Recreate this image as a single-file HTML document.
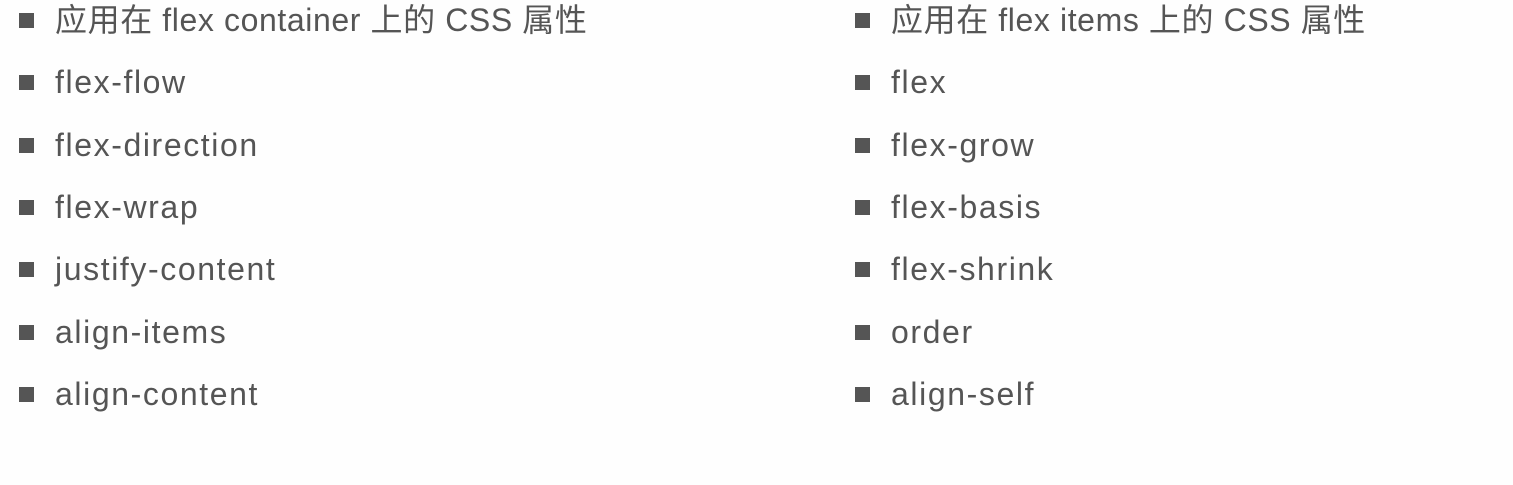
<!DOCTYPE html>
<html><head><meta charset="utf-8"><style>
html,body{margin:0;padding:0;background:#fefefe;width:1513px;height:485px;overflow:hidden}
.i{position:absolute;height:40px;line-height:40px;font-family:"Liberation Sans","Noto Sans CJK SC",sans-serif;font-size:32px;color:#555;letter-spacing:1.6px;white-space:nowrap}
.i::before{content:"";position:absolute;left:-36px;top:13px;width:15px;height:15px;background:#555}
</style></head><body>
<div class="i" style="left:55px;top:0px;letter-spacing:0.6px">应用在 flex container 上的 CSS 属性</div>
<div class="i" style="left:55px;top:62px">flex-flow</div>
<div class="i" style="left:55px;top:125px">flex-direction</div>
<div class="i" style="left:55px;top:187px">flex-wrap</div>
<div class="i" style="left:55px;top:249px">justify-content</div>
<div class="i" style="left:55px;top:312px">align-items</div>
<div class="i" style="left:55px;top:374px">align-content</div>
<div class="i" style="left:891px;top:0px;letter-spacing:0.6px">应用在 flex items 上的 CSS 属性</div>
<div class="i" style="left:891px;top:62px">flex</div>
<div class="i" style="left:891px;top:125px">flex-grow</div>
<div class="i" style="left:891px;top:187px">flex-basis</div>
<div class="i" style="left:891px;top:249px">flex-shrink</div>
<div class="i" style="left:891px;top:312px">order</div>
<div class="i" style="left:891px;top:374px">align-self</div>
</body></html>
